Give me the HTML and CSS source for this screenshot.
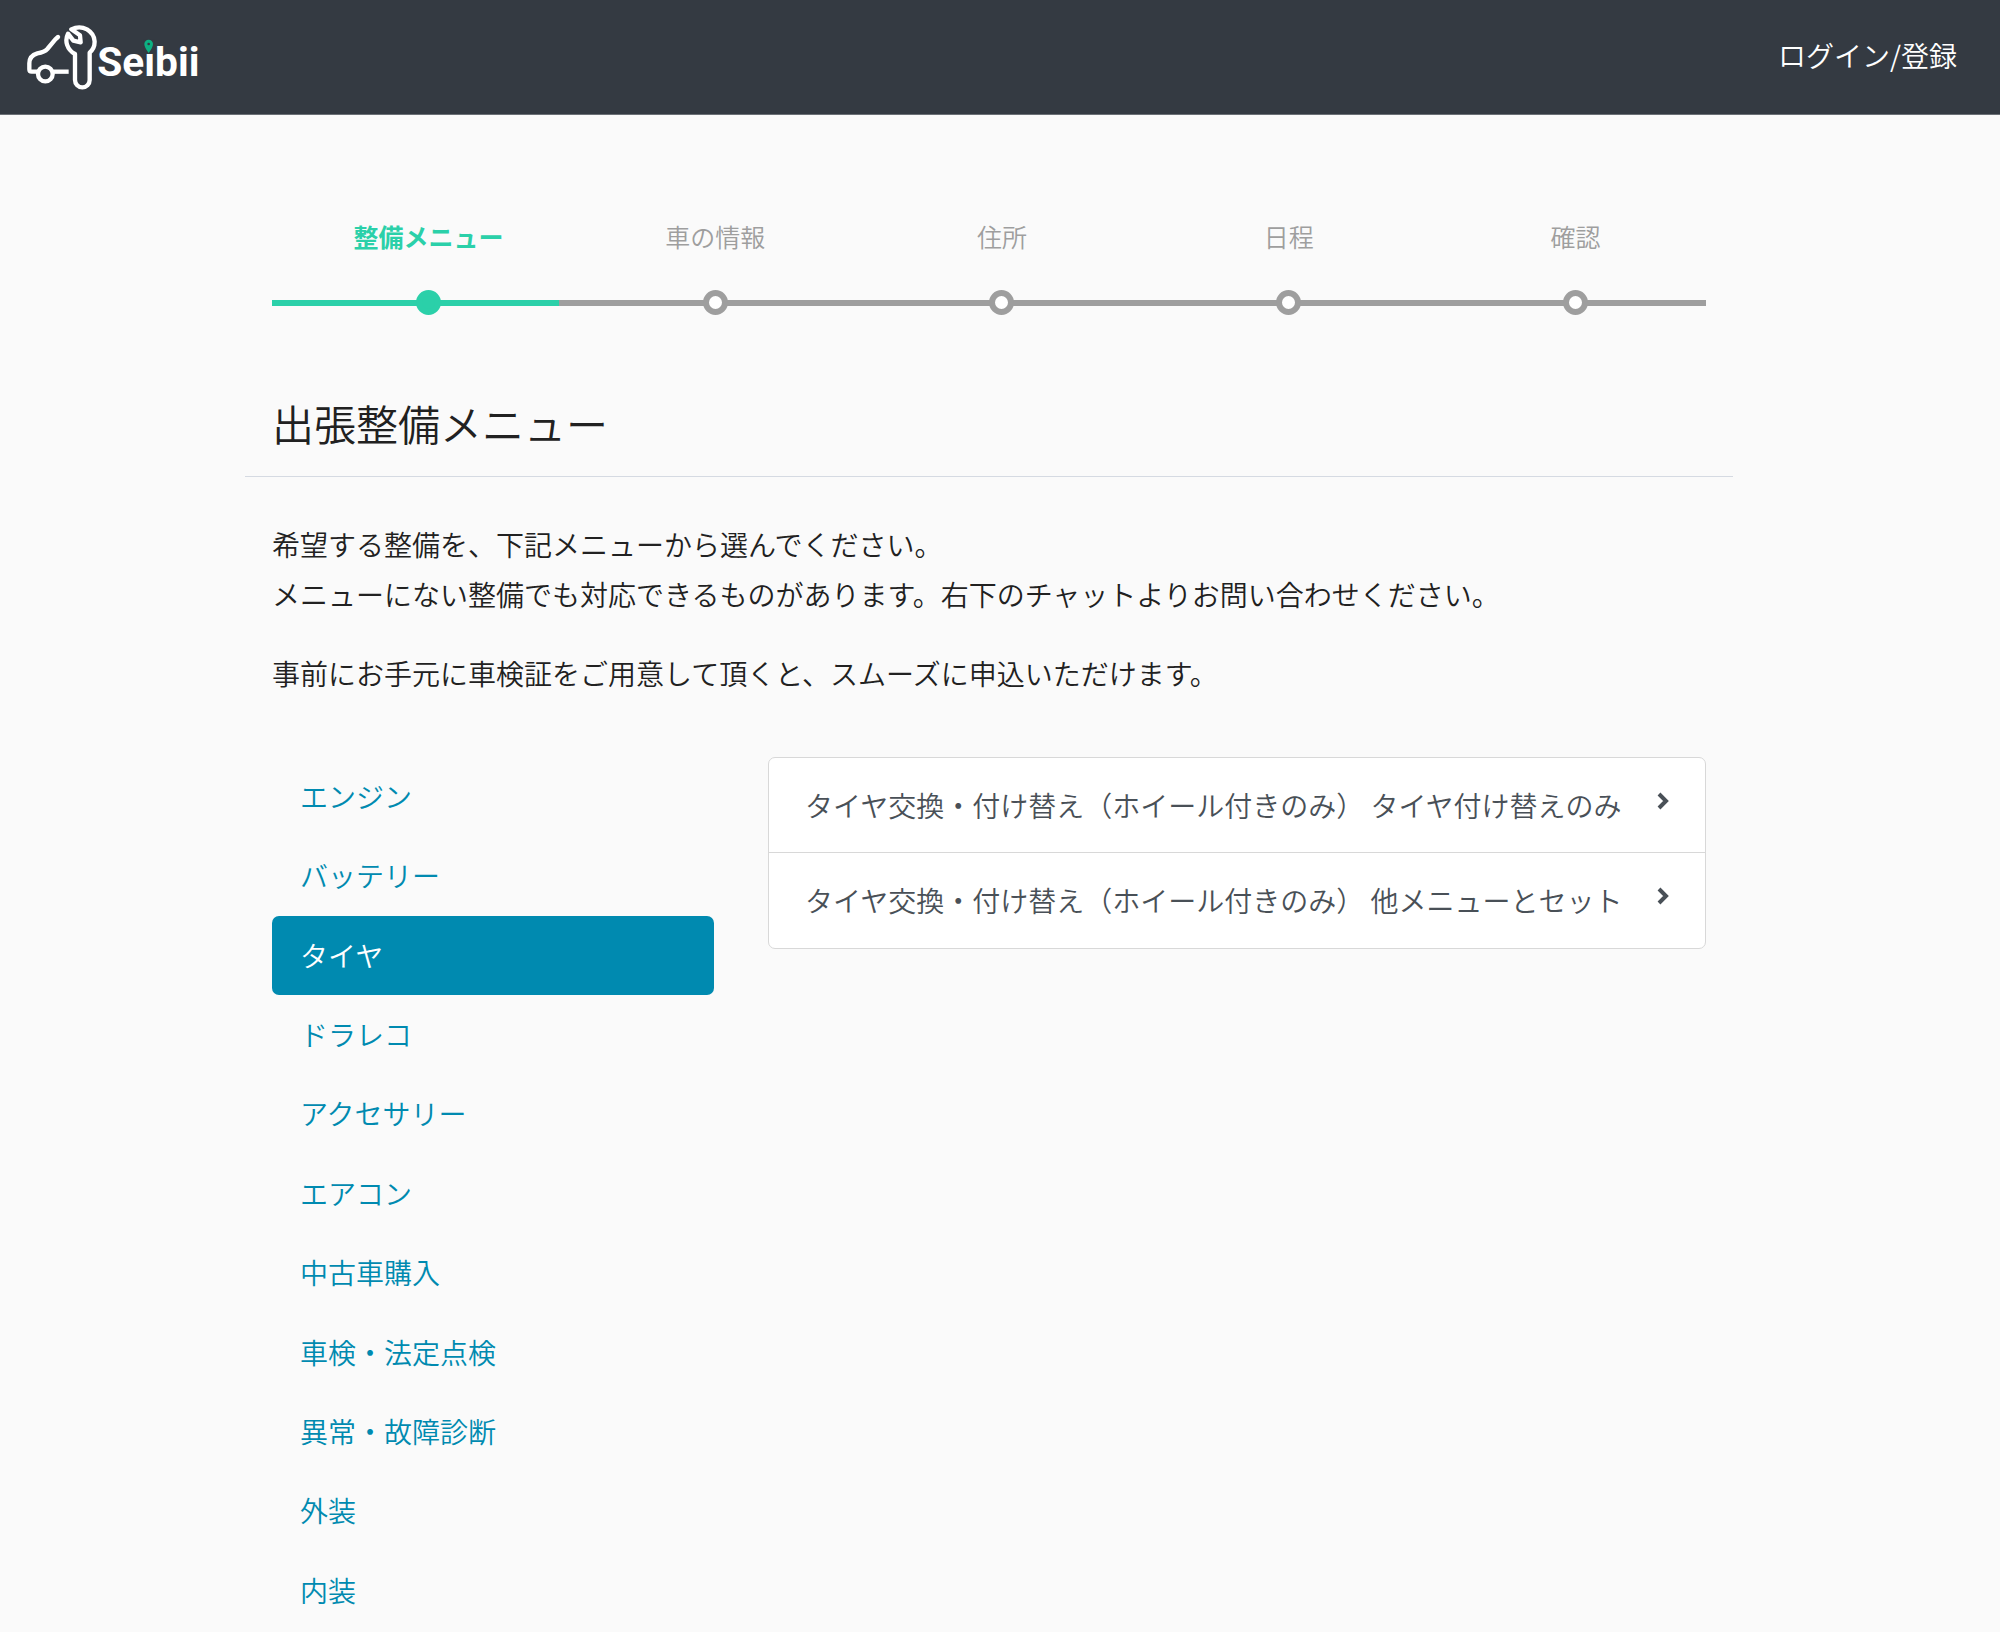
FILE: index.html
```html
<!DOCTYPE html>
<html lang="ja">
<head>
<meta charset="utf-8">
<meta name="viewport" content="width=device-width, initial-scale=1">
<title>出張整備メニュー | Seibii</title>
<link rel="stylesheet" href="styles.css">
</head>
<body>
<header class="navbar">
  <a class="brand" href="#" aria-label="Seibii">
    <svg class="brand-logo" viewBox="78 72 528 198">
      <g fill="none" stroke="#fff" stroke-width="13" stroke-linejoin="round">
        <path stroke-linecap="round" d="M174 111L166 118L142 147Q134 156 112 160Q88 167 88 190V208Q88 215 95 215H112"/>
        <circle cx="136" cy="222" r="22"/>
        <path d="M160 215H206"/>
        <path d="M214 88Q238 76 261 88C291 106 289 141 269 158V240A22 22 0 0 1 225 240V162C201 149 193 122 204 101L220 122L242 127L240 106Z"/>
      </g>
      <text class="brand-name" x="292" y="228">Seibii</text>
      <path fill="#343a42" d="M431 118h33v40h-33z"/>
      <path fill="#0cb082" fill-rule="evenodd" d="M446 159Q433 142 433 132A13 13 0 0 1 459 132Q459 142 446 159ZM446 128a4 4 0 1 0 0 8a4 4 0 1 0 0-8Z"/>
    </svg>
  </a>
  <a class="login" href="#">ログイン/登録</a>
</header>
<main class="page">
  <ol class="steps">
    <li class="step is-current" aria-current="step">整備メニュー</li>
    <li class="step">車の情報</li>
    <li class="step">住所</li>
    <li class="step">日程</li>
    <li class="step">確認</li>
  </ol>
  <h1 class="title">出張整備メニュー</h1>
  <div class="intro">
    <p>希望する整備を、下記メニューから選んでください。<br>メニューにない整備でも対応できるものがあります。右下のチャットよりお問い合わせください。</p>
    <p>事前にお手元に車検証をご用意して頂くと、スムーズに申込いただけます。</p>
  </div>
  <div class="columns">
    <nav class="categories">
      <a href="#">エンジン</a>
      <a href="#">バッテリー</a>
      <a class="is-active" href="#">タイヤ</a>
      <a href="#">ドラレコ</a>
      <a href="#">アクセサリー</a>
      <a href="#">エアコン</a>
      <a href="#">中古車購入</a>
      <a href="#">車検・法定点検</a>
      <a href="#">異常・故障診断</a>
      <a href="#">外装</a>
      <a href="#">内装</a>
    </nav>
    <div class="menu-list">
      <a href="#"><span>タイヤ交換・付け替え（ホイール付きのみ） タイヤ付け替えのみ</span>
        <svg class="chevron" viewBox="0 0 12 18"><path d="M2 2l7 7-7 7"/></svg></a>
      <a href="#"><span>タイヤ交換・付け替え（ホイール付きのみ） 他メニューとセット</span>
        <svg class="chevron" viewBox="0 0 12 18"><path d="M2 2l7 7-7 7"/></svg></a>
    </div>
  </div>
</main>
</body>
</html>
```
FILE: styles.css
```css
*,
*::after {
  box-sizing: border-box;
}

body {
  margin: 0;
  background: #fafafa;
  color: #212121;
  font-family: "Noto Sans CJK JP", sans-serif;
  font-size: 28px;
  font-weight: 350;
  line-height: 1.8;
}

a {
  text-decoration: none;
}

.navbar {
  display: flex;
  align-items: center;
  justify-content: space-between;
  min-height: 115px;
  padding: 0 43px 0 26px;
  border-bottom: 1px solid #6b7076;
  background: #343a42;
}

.brand {
  display: flex;
}

.brand-logo {
  width: 176px;
  height: 66px;
}

.brand-name {
  fill: #fff;
  font-family: Roboto, sans-serif;
  font-size: 122px;
  font-weight: 700;
}

.login {
  padding-bottom: 4px;
  color: #fff;
}

.page {
  min-width: 1200px;
  margin: 0 267px 0 245px;
  padding-top: 99px;
}

.steps {
  display: flex;
  margin: 0 27px;
  padding: 0;
  list-style: none;
  font-size: 25px;
}

/* Each step paints its own stretch of the track behind the dot. */
.step {
  display: flex;
  flex: 1;
  flex-direction: column;
  align-items: center;
  gap: 31px;
  padding-left: 26px;
  background: linear-gradient(#9e9e9e, #9e9e9e) 0 calc(100% - 9px) / 100% 6px no-repeat;
  color: #9e9e9e;
}

.step::after {
  width: 25px;
  height: 25px;
  border: 6px solid #9e9e9e;
  border-radius: 50%;
  background: #fff;
  content: "";
}

.step.is-current {
  background-image: linear-gradient(#2bd0a9, #2bd0a9);
  color: #2bd0a9;
  font-weight: 700;
}

.step.is-current::after {
  border-color: #2bd0a9;
  background: #2bd0a9;
}

.title {
  margin: 70px 0 0;
  padding: 0 27px 15px;
  border-bottom: 1px solid #d5dae2;
  font-size: 42px;
  font-weight: 350;
}

.intro {
  padding: 42px 27px 0;
}

.intro p {
  margin: 0 0 29px;
}

.columns {
  display: grid;
  grid-template-columns: 442px 1fr;
  gap: 54px;
  align-items: start;
  padding: 29px 27px 0;
}

.categories a {
  display: block;
  padding: 14px 28px 15px;
  border-radius: 7px;
  color: #008ab0;
}

.categories .is-active {
  background: #008ab0;
  color: #fff;
}

.menu-list {
  border: 1px solid #d8d8d8;
  border-radius: 7px;
  background: #fff;
}

.menu-list a {
  display: flex;
  align-items: center;
  justify-content: space-between;
  padding: 22px 36px;
  color: #495057;
}

.menu-list a + a {
  border-top: 1px solid #d8d8d8;
}

.chevron {
  width: 12px;
  height: 18px;
  margin-bottom: 8px;
  fill: none;
  stroke: #495057;
  stroke-width: 4;
}
```
